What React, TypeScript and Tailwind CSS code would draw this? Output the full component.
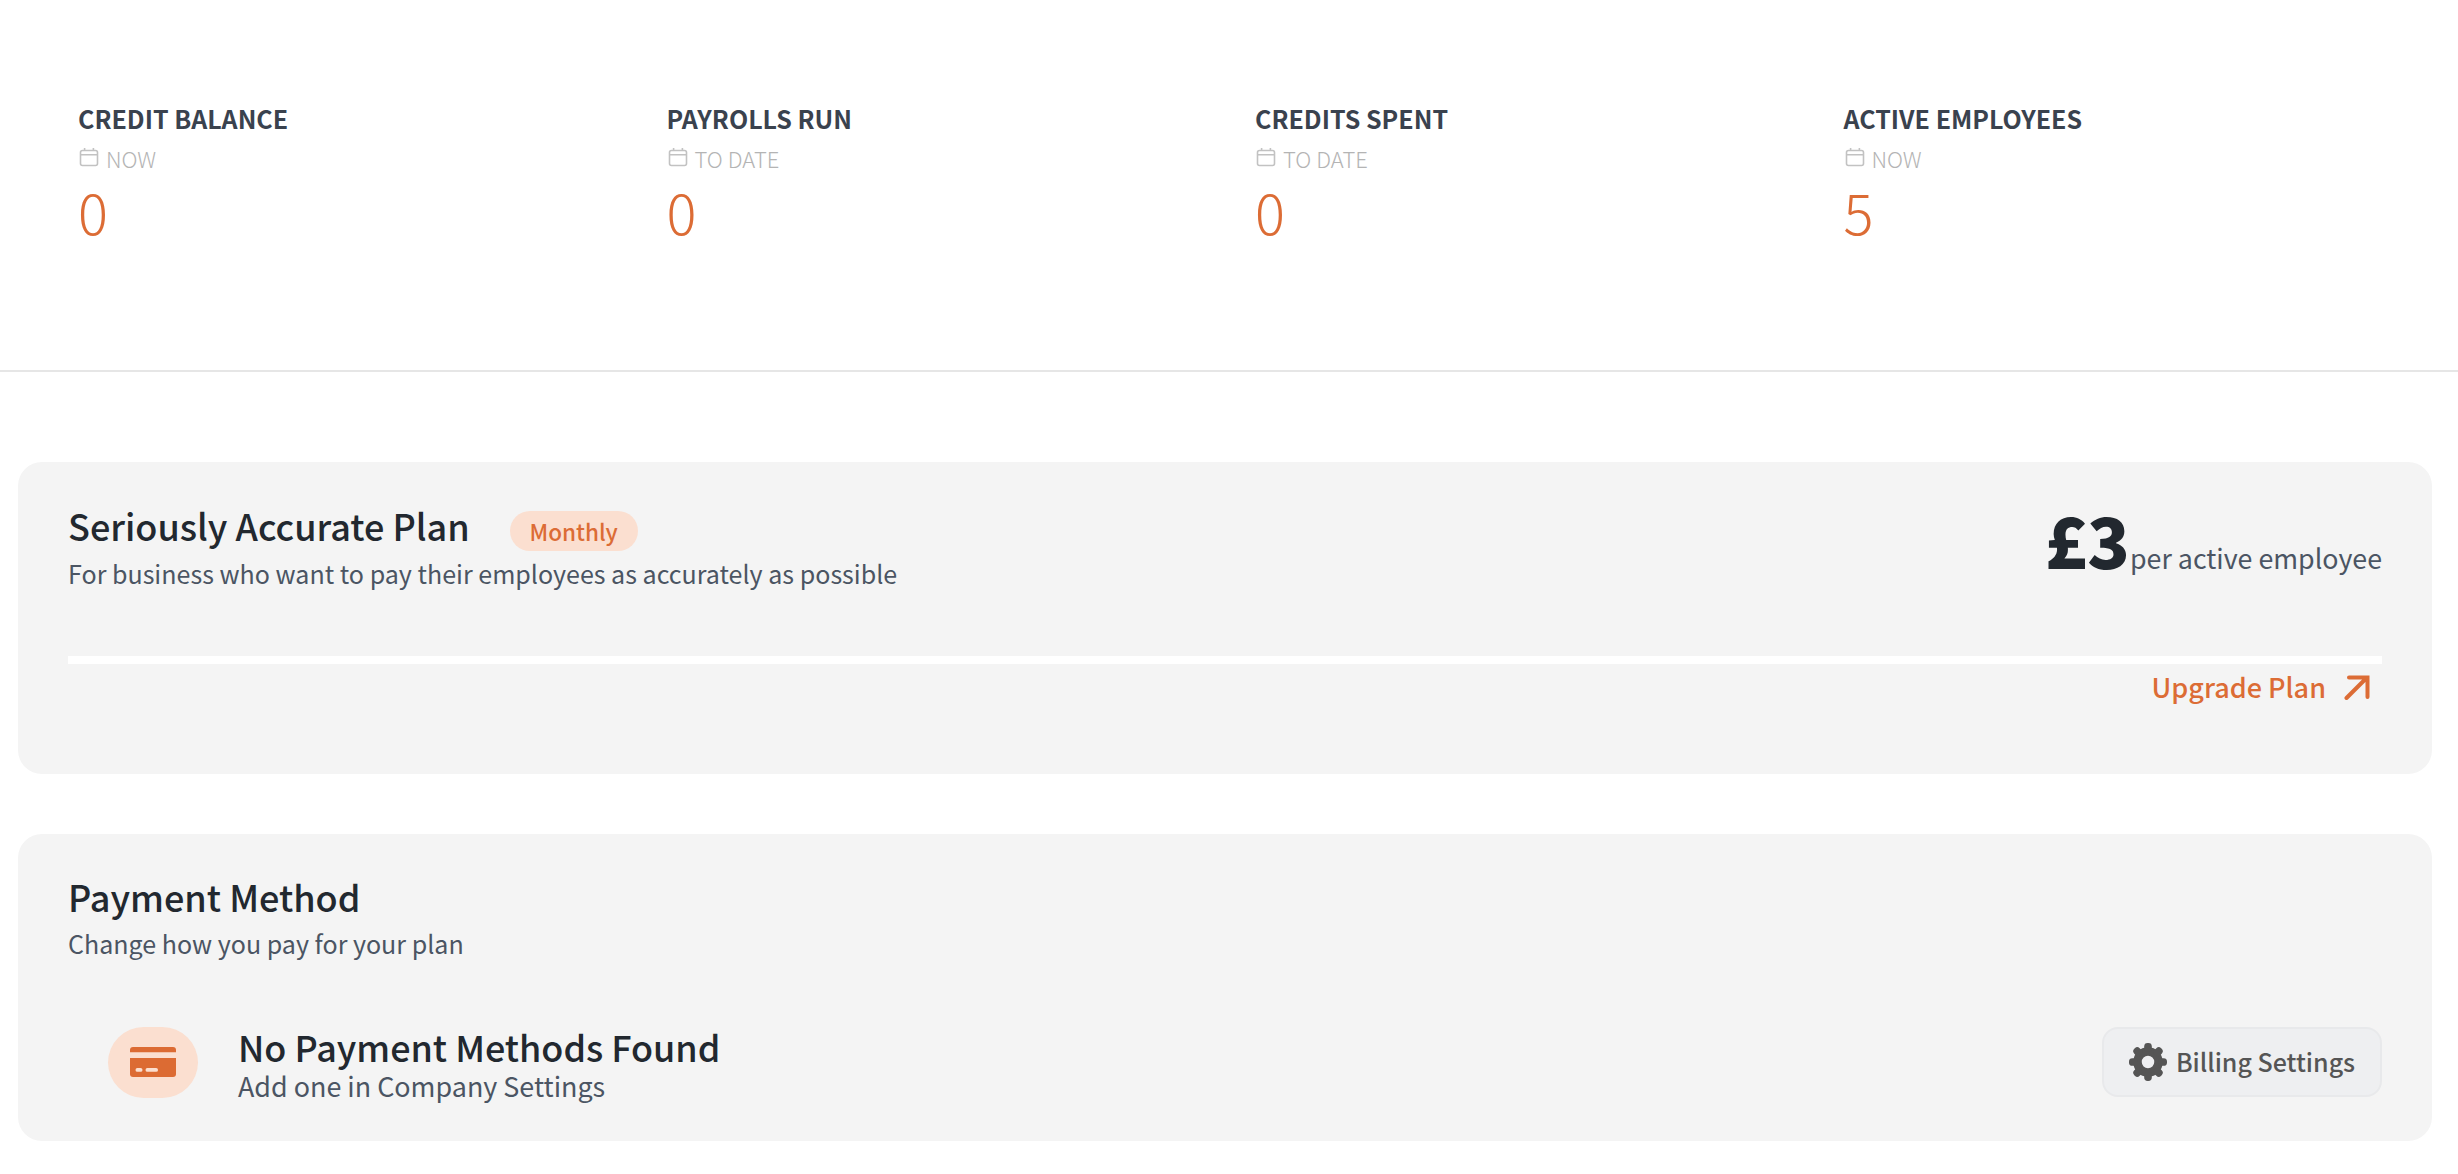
import React from "react";

function Calendar() {
  return (
    <svg width="20" height="20" viewBox="0 0 20 20" fill="none" stroke="#c2c2c2" strokeWidth="1.6" className="shrink-0">
      <rect x="1.5" y="3.5" width="17" height="15" rx="2" />
      <path d="M1.5 7.7H18.5M5.6 1V3.5M14.4 1V3.5" />
    </svg>
  );
}

function Stat({ title, sub, value }: { title: string; sub: string; value: string }) {
  return (
    <div className="pl-[26px]">
      <div className="text-[25px] leading-[36px] font-bold text-[#3a424e]">{title}</div>
      <div className="mt-[4px] flex h-[36px] items-center gap-[7px] pl-[1px] text-[22px] leading-[36px] font-light text-[#b4b4b4]">
        <div className="-mt-[3px]"><Calendar /></div>
        <span>{sub}</span>
      </div>
      <div className="-mt-[1px] text-[56px] leading-[72px] font-light text-[#dc6c35]">{value}</div>
    </div>
  );
}

function CreditCard() {
  return (
    <svg width="46" height="30" viewBox="0 0 46 30" fill="#dc6b33">
      <path d="M0 5.3V3a3 3 0 0 1 3-3H43a3 3 0 0 1 3 3V5.3Z" />
      <path d="M0 11H46V27a3 3 0 0 1-3 3H3a3 3 0 0 1-3-3Z" />
      <rect x="5.5" y="21" width="7" height="3.8" rx="1.9" fill="#fbdfd0" />
      <rect x="15.5" y="21" width="12.5" height="3.8" rx="1.9" fill="#fbdfd0" />
    </svg>
  );
}

function Gear() {
  const teeth = [0, 45, 90, 135, 180, 225, 270, 315];
  return (
    <svg width="38" height="38" viewBox="0 0 38 38" className="shrink-0">
      <circle cx="19" cy="19" r="10.5" fill="none" stroke="#555" strokeWidth="8.5" />
      {teeth.map((a) => (
        <rect key={a} x="15.2" y="0" width="7.6" height="9" rx="3.4" fill="#555" transform={`rotate(${a} 19 19)`} />
      ))}
    </svg>
  );
}

export default function App() {
  return (
    <div className="min-h-[1174px] bg-white font-['Noto_Sans_CJK_SC','Noto_Sans',sans-serif]">
      <div className="grid h-[372px] grid-cols-4 border-b-2 border-[#e6e6e6] px-[52px] pt-[100px]">
        <Stat title="CREDIT BALANCE" sub="NOW" value="0" />
        <Stat title="PAYROLLS RUN" sub="TO DATE" value="0" />
        <Stat title="CREDITS SPENT" sub="TO DATE" value="0" />
        <Stat title="ACTIVE EMPLOYEES" sub="NOW" value="5" />
      </div>

      <div className="mt-[90px] mr-[26px] ml-[18px] h-[312px] rounded-[24px] bg-[#f4f4f4] px-[50px] pt-[41px]">
        <div className="flex items-start justify-between">
          <div>
            <div className="flex items-start">
              <h2 className="text-[36px] leading-[44px] font-medium text-[#22282f]">Seriously Accurate Plan</h2>
              <span className="mt-[8px] ml-[40px] flex h-[40px] w-[128px] items-center justify-center rounded-full bg-[#fbdfd0] text-[22.5px] leading-[30px] font-medium text-[#dc6c35]">Monthly</span>
            </div>
            <p className="mt-[4px] text-[25.05px] leading-[36px] font-normal text-[#4b5563]">For business who want to pay their employees as accurately as possible</p>
          </div>
          <div className="-mt-[4px] flex items-baseline">
            <span className="text-[70px] leading-[80px] font-black text-[#22282f]">£3</span>
            <span className="text-[26.8px] leading-[36px] font-normal text-[#4b5563]">per active employee</span>
          </div>
        </div>
        <div className="mt-[65px] h-[8px] bg-white" />
        <div className="mt-[5px] flex h-[36px] items-center justify-end gap-[18px] pr-[12px] text-[27px] leading-[36px] font-medium text-[#dc6c35]">
          <span>Upgrade Plan</span>
          <svg width="26" height="25" viewBox="0 0 26 25" fill="none" stroke="#dc6c35" strokeWidth="4" strokeLinecap="round" strokeLinejoin="miter">
            <path d="M2.5 23L23 2.5M5 2.5H23.5V22" />
          </svg>
        </div>
      </div>

      <div className="mt-[60px] mr-[26px] ml-[18px] h-[307px] rounded-[24px] bg-[#f4f4f4] px-[50px] pt-[40px]">
        <h2 className="text-[36px] leading-[44px] font-medium text-[#22282f]">Payment Method</h2>
        <p className="mt-[7px] text-[25.05px] leading-[36px] font-normal text-[#4b5563]">Change how you pay for your plan</p>
        <div className="mt-[59.5px] flex items-center justify-between">
          <div className="flex items-center pl-[40px]">
            <div className="flex h-[71px] w-[90px] items-center justify-center rounded-[36px] bg-[#fbdfd0]">
              <CreditCard />
            </div>
            <div className="mt-[3px] ml-[40px]">
              <div className="text-[35.9px] leading-[44px] font-medium text-[#22282f]">No Payment Methods Found</div>
              <div className="text-[26.9px] leading-[36px] font-normal text-[#4b5563]">Add one in Company Settings</div>
            </div>
          </div>
          <button className="flex h-[70px] w-[280px] items-center justify-center gap-[9px] rounded-[16px] border-2 border-[#e8e9eb] bg-[#eeeff1] text-[25px] leading-[36px] font-medium text-[#555555]">
            <Gear />
            <span className="-mt-[2px]">Billing Settings</span>
          </button>
        </div>
      </div>
    </div>
  );
}
